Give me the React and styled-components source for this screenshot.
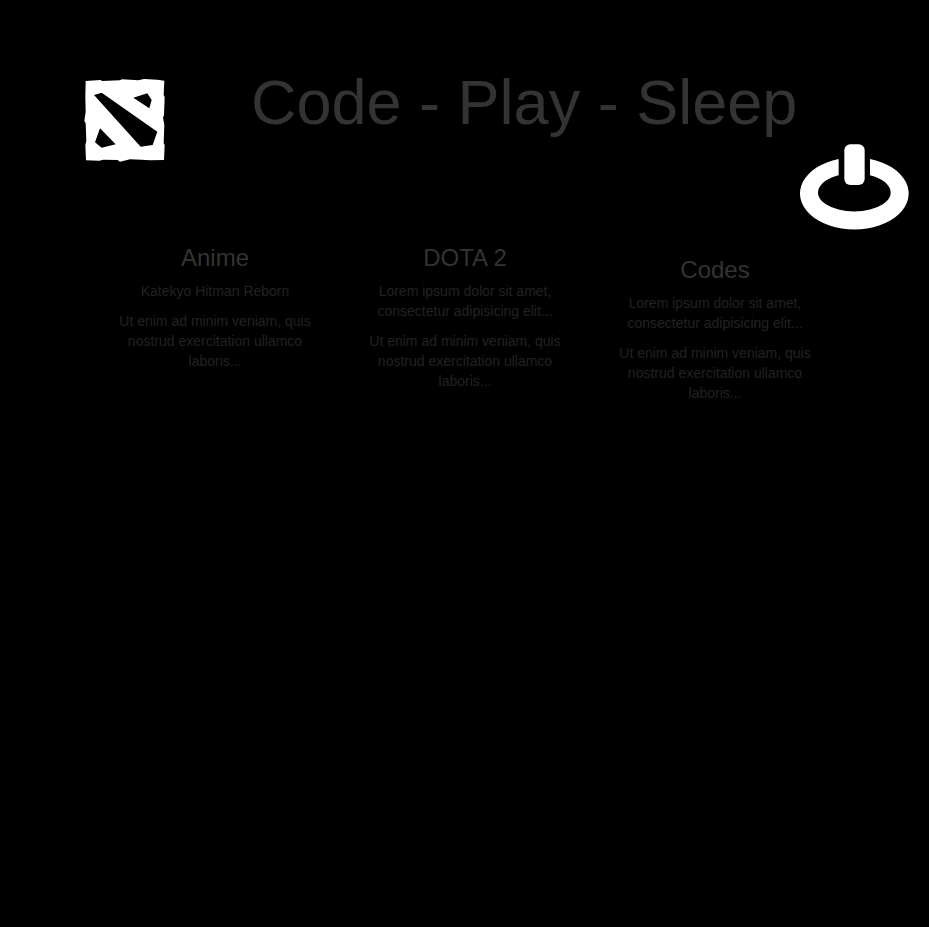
import React from "react";
import styled, { createGlobalStyle } from "styled-components";

const GlobalStyle = createGlobalStyle`
  html, body {
    margin: 0;
    padding: 0;
    background: #000;
  }
  body {
    min-height: 927px;
    font-family: "Liberation Sans", Arial, sans-serif;
    font-size: 14px;
    line-height: 20px;
    color: #222;
  }
`;

const Page = styled.div`
  width: 929px;
  min-height: 927px;
  overflow: hidden;
`;

const Header = styled.header`
  display: flex;
  align-items: flex-start;
  height: 229px;
  padding-left: 85px;
`;

const LogoIcon = styled.svg`
  flex: none;
  width: 110px;
  height: 110px;
  margin: 65px -15px 0 -15px;
`;

const Title = styled.h1`
  flex: none;
  margin: 69px 0 0 86px;
  font-size: 63px;
  line-height: 66px;
  font-weight: 400;
  color: #333;
`;

const PowerIcon = styled.svg`
  flex: none;
  width: 130px;
  height: 105px;
  margin: 135px 0 0 -6px;
`;

const Columns = styled.main`
  display: flex;
  align-items: flex-start;
  padding-left: 90px;
`;

const Column = styled.section`
  flex: none;
  box-sizing: border-box;
  width: 250px;
  padding: ${(p) => (p.$lowered ? "27px" : "15px")} 15px 0;
  text-align: center;
`;

const Heading = styled.h2`
  margin: 0 0 10px;
  font-size: 24px;
  line-height: 27px;
  font-weight: 400;
  color: #333;
`;

const Text = styled.p`
  margin: 0 0 10px;
  color: #222;
`;

const columns = [
  {
    title: "Anime",
    intro: "Katekyo Hitman Reborn",
  },
  {
    title: "DOTA 2",
    intro: "Lorem ipsum dolor sit amet, consectetur adipisicing elit...",
  },
  {
    title: "Codes",
    intro: "Lorem ipsum dolor sit amet, consectetur adipisicing elit...",
    lowered: true,
  },
];

const Logo = () => (
  <LogoIcon viewBox="0 0 330 330" aria-label="Dota 2">
    <path
      fill="#fff"
      fillRule="evenodd"
      d="M47 48 L92 45 L96 48 L150 46 L156 43 L205 46 L222 42 L262 44 L283 47 L281 90 L284 96 L282 150 L279 158 L283 180 L281 235 L284 240 L282 285 L240 286 L215 284 L180 283 L150 290 L143 285 L100 284 L88 287 L48 286 L46 240 L49 228 L47 175 L43 168 L47 140 L46 95 Z
         M72 90 L95 83 L262 200 L248 240 L212 245 Z
         M190 98 L232 85 L245 105 L238 130 Z
         M90 190 L137 238 L95 248 L75 232 Z"
    />
  </LogoIcon>
);

const Power = () => (
  <PowerIcon viewBox="0 0 390 315" aria-label="Power">
    <path
      fill="#fff"
      d="M143 72 A163 108 0 1 0 237 72 L237 121 A109 57 0 1 1 143 121 Z"
    />
    <rect x="160" y="28" width="61" height="122" rx="18" fill="#fff" />
  </PowerIcon>
);

export default function App() {
  return (
    <Page>
      <GlobalStyle />
      <Header>
        <Logo />
        <Title>Code - Play - Sleep</Title>
        <Power />
      </Header>
      <Columns>
        {columns.map((c) => (
          <Column key={c.title} $lowered={c.lowered}>
            <Heading>{c.title}</Heading>
            <Text>{c.intro}</Text>
            <Text>Ut enim ad minim veniam, quis nostrud exercitation ullamco laboris...</Text>
          </Column>
        ))}
      </Columns>
    </Page>
  );
}
